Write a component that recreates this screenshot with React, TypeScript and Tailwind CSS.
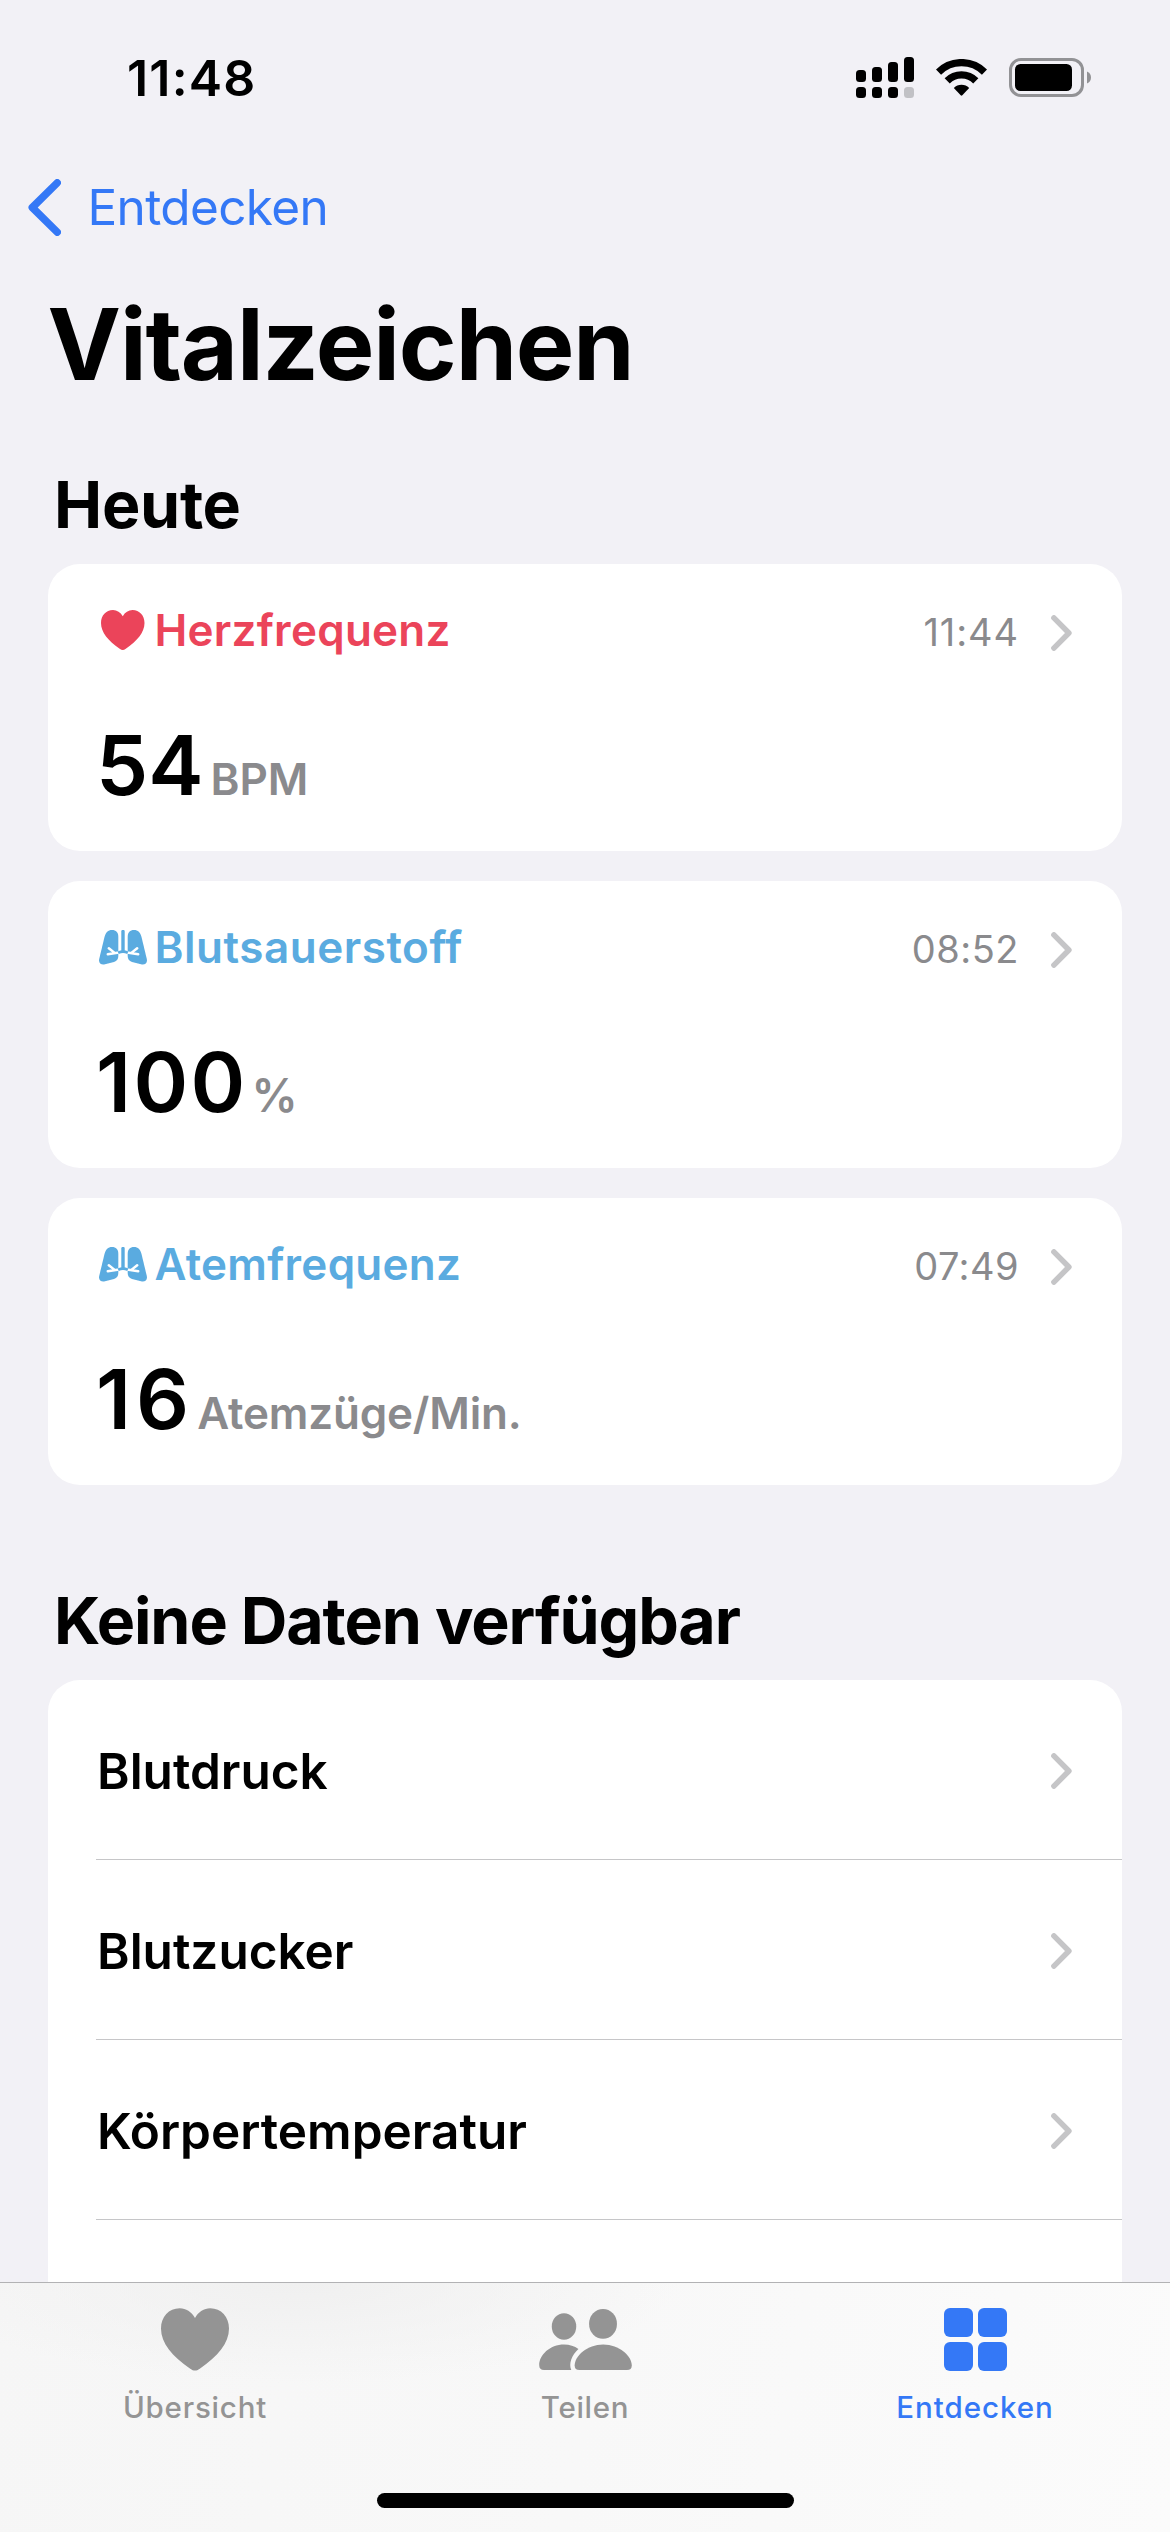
import type { ReactNode } from "react";
import { clsx } from "clsx";

const vitals = [
    { name: "Herzfrequenz", time: "11:44", value: "54", unit: "BPM", icon: "heart", nameClass: "text-[#eb445a] tracking-[0.006em]", timeClass: "tracking-[0.024em]", valueClass: "", unitClass: "ml-[7px] text-[44px]" },
    { name: "Blutsauerstoff", time: "08:52", value: "100", unit: "%", icon: "lungs", nameClass: "text-[#5aabe0] tracking-[0.012em]", timeClass: "tracking-[0.014em]", valueClass: "tracking-[2.3px]", unitClass: "ml-[4px] text-[46px]" },
    { name: "Atemfrequenz", time: "07:49", value: "16", unit: "Atemzüge/Min.", icon: "lungs", nameClass: "text-[#5aabe0] tracking-[0.006em]", timeClass: "tracking-[0.012em]", valueClass: "tracking-[5px]", unitClass: "ml-[3px] text-[44px] tracking-[-0.004em]" },
];

const emptyRows = ["Blutdruck", "Blutzucker", "Körpertemperatur"];

function Heart({ className }: { className?: string }) {
    return (
        <svg viewBox="0 0 43.5 40" fill="currentColor" className={className}>
            <path d="M21.75 6.2C19.5 2.3 16 0 12 0 5 0 0 5.5 0 13c0 9.300 7.200 17.900 18.700 25.700 2.300 1.600 3.800 1.600 6.100 0C36.300 30.900 43.500 22.300 43.500 13 43.500 5.500 38.500 0 31.500 0c-4 0-7.500 2.300-9.750 6.200Z" />
        </svg>
    );
}

function Lungs() {
    const lobe = "M13 0C17 0 19.300 2.500 19.300 6.500V26C19.300 29 18 31 15 32L6 34.300C2 35.200-.6 33 .2 29L5.500 7C6.700 2.500 9 0 13 0Z";
    const bronchi = "M20 22.600 8.800 24.300M15 22.400 9.800 18.200";
    return (
        <svg viewBox="0 0 48 35" className="w-12 h-[35px]">
            {["", "translate(48 0) scale(-1 1)"].map((side) => (
                <g key={side} transform={side}>
                    <path d={lobe} fill="currentColor" />
                    <path d={bronchi} stroke="white" strokeWidth="2.500" strokeLinecap="round" />
                </g>
            ))}
            <path d="M24 1.500V21" stroke="currentColor" strokeWidth="3.400" strokeLinecap="round" />
            <path d="M19.200 22.700Q24 20.600 28.800 22.700" stroke="currentColor" strokeWidth="2.800" fill="none" />
        </svg>
    );
}

function Chevron() {
    return (
        <svg viewBox="0 0 21 36" fill="none" className="w-[21px] h-9 text-[#c5c5c7]">
            <path d="M2.900 2.900 17.900 18 2.900 33.100" stroke="currentColor" strokeWidth="5.500" strokeLinecap="round" strokeLinejoin="round" />
        </svg>
    );
}

function People() {
    return (
        <svg viewBox="0 0 93 61.300" fill="currentColor" className="w-[93px] h-[61px]">
            <ellipse cx="24.900" cy="17.500" rx="12.300" ry="13.300" />
            <ellipse cx="64.100" cy="15" rx="14" ry="15" />
            <path d="M39.400 40.200C35.500 37.300 30.500 35.700 25 35.700 10.500 35.700 0 46.500 0 56.500 0 59.800 1.600 61.300 4.800 61.300H32.200C29.500 55 32.500 46.500 39.400 40.200Z" />
            <path d="M64.300 35.700C48 35.700 35.600 47.500 35.600 56.800 35.600 59.900 37.200 61.300 40.400 61.300H88.200C91.400 61.300 93 59.900 93 56.800 93 47.500 80.600 35.700 64.300 35.700Z" />
        </svg>
    );
}

function StatusBar() {
    return (
        <div className="h-[141px] pt-[47px] pl-[127px] pr-[79px] flex items-start justify-between">
            <span className="text-[50px] leading-[62px] font-semibold tracking-[0.024em]">11:48</span>
            <div className="h-[61px] flex items-center gap-[22px]">
                <svg viewBox="0 0 58 41" className="w-[58px] h-[41px]">
                    <rect x="0" y="13" width="10" height="12" rx="3.500" />
                    <rect x="16" y="10" width="10" height="15" rx="3.500" />
                    <rect x="32" y="5" width="10" height="20" rx="3.500" />
                    <rect x="48" y="0" width="10" height="25" rx="3.500" />
                    <rect x="0" y="30" width="10" height="11" rx="3.500" />
                    <rect x="16" y="30" width="10" height="11" rx="3.500" />
                    <rect x="32" y="30" width="10" height="11" rx="3.500" />
                    <rect x="48" y="30" width="10" height="11" rx="3.500" fill="#c1c1c5" />
                </svg>
                <svg viewBox="0 0 51 37" fill="none" stroke="black" strokeWidth="7.300" className="w-[51px] h-[37px]">
                    <path d="M2.500 13.100A32.600 32.600 0 0 1 48.500 13.100" />
                    <path d="M11.200 21.900A20.200 20.200 0 0 1 39.800 21.900" />
                    <path d="M17.800 29A11 11 0 0 1 33.200 29L26.300 36.300Q25.500 37 24.700 36.300Z" fill="black" stroke="none" />
                </svg>
                <svg viewBox="0 0 82 39" className="w-[82px] h-[39px]">
                    <rect x="1.500" y="1.500" width="72" height="36" rx="10.500" fill="none" stroke="#929295" strokeWidth="3" />
                    <rect x="6" y="6" width="57" height="27" rx="5.500" />
                    <path d="M78 13.500C80.500 14.500 82 16.800 82 19.500S80.500 24.500 78 25.500Z" fill="#929295" />
                </svg>
            </div>
        </div>
    );
}

function Tab({ label, active, className, children }: { label: string; active?: boolean; className: string; children: ReactNode }) {
    return (
        <button className={clsx("flex flex-col items-center pt-[25px]", active ? "text-[#3478f6]" : "text-[#949494]")}>
            <span className="h-[63px] flex items-center">{children}</span>
            <span className={clsx("mt-[18px] text-[29.5px] leading-9 font-[480]", className)}>{label}</span>
        </button>
    );
}

export default function App() {
    return (
        <div className="relative w-[1170px] h-[2532px] overflow-hidden bg-[#f2f1f6] text-black font-['Inter','Liberation_Sans',sans-serif]">
            <StatusBar />

            <nav className="h-[132px] pl-7 flex items-center text-[#3478f6]">
                <svg viewBox="0 0 33 57" fill="none" className="w-[33px] h-[57px]">
                    <path d="M29.200 3.800 4.300 28.500 29.200 53.200" stroke="currentColor" strokeWidth="7.500" strokeLinecap="round" strokeLinejoin="round" />
                </svg>
                <span className="ml-[26.5px] text-[49.5px] tracking-[-0.013em]">Entdecken</span>
            </nav>

            <h1 className="mt-3 pl-[47.5px] text-[98.5px] leading-[120px] font-bold tracking-[-0.0116em]">Vitalzeichen</h1>

            <main className="px-12">
                <h2 className="mt-[59.5px] pl-1.5 text-[64.5px] leading-[80px] font-bold tracking-[-0.0045em]">Heute</h2>
                <div className="mt-[19.5px] flex flex-col gap-[30px]">
                    {vitals.map((item) => (
                        <section key={item.name} className="h-[287px] rounded-[32px] bg-white pt-9 pl-12 pr-[50px]">
                            <div className="h-[60px] flex items-center">
                                <div className={clsx("flex items-center text-[44px] font-[570]", item.nameClass)}>
                                    <span className="w-12 ml-[3px] mr-[7.5px] flex justify-center">
                                        {item.icon === "heart" ? <Heart className="w-[43.5px] h-10" /> : <span className="pt-[1px]"><Lungs /></span>}
                                    </span>
                                    {item.name}
                                </div>
                                <div className="ml-auto mt-[5px] flex items-center gap-8">
                                    <span className={clsx("text-[38px] text-[#8a8a8d]", item.timeClass)}>{item.time}</span>
                                    <Chevron />
                                </div>
                            </div>
                            <div className="mt-[65px] flex items-baseline leading-[80px]">
                                <span className={clsx("text-[83px] font-semibold", item.valueClass)}>{item.value}</span>
                                <span className={clsx("text-[#8a8a8d] font-[560]", item.unitClass)}>{item.unit}</span>
                            </div>
                        </section>
                    ))}
                </div>

                <h2 className="mt-[95.5px] pl-1.5 text-[64.5px] leading-[80px] font-bold tracking-[-0.0175em]">Keine Daten verfügbar</h2>
                <ul className="mt-[19.5px] h-[720px] rounded-[32px] bg-white pl-12">
                    {emptyRows.map((name) => (
                        <li key={name} className="h-[180px] pt-[3px] pr-[50px] flex items-center justify-between border-b border-[#c6c6c8]">
                            <span className="pl-[1px] text-[49.5px] font-semibold">{name}</span>
                            <Chevron />
                        </li>
                    ))}
                </ul>
            </main>

            {/* Tab bar */}
            <footer className="absolute inset-x-0 bottom-0 h-[250px] border-t border-[#b2b2b4] bg-[radial-gradient(ellipse_380px_100px_at_300px_0px,#f0f0f0,transparent),linear-gradient(100deg,#f6f6f6,#f8f8f8_50%,#fbfbfb)]">
                <div className="grid grid-cols-3">
                    <Tab label="Übersicht" className="tracking-[0.027em]">
                        <Heart className="w-[68px] h-[63px]" />
                    </Tab>
                    <Tab label="Teilen" className="tracking-[0.024em]">
                        <People />
                    </Tab>
                    <Tab label="Entdecken" active className="tracking-[0.033em]">
                        <span className="grid grid-cols-2 gap-[5px]">
                            {[0, 1, 2, 3].map((i) => (
                                <span key={i} className="size-[29px] rounded-[6px] bg-[#3478f6]" />
                            ))}
                        </span>
                    </Tab>
                </div>
                <div className="mx-auto mt-[68px] w-[417px] h-[15px] rounded-full bg-black" />
            </footer>
        </div>
    );
}
